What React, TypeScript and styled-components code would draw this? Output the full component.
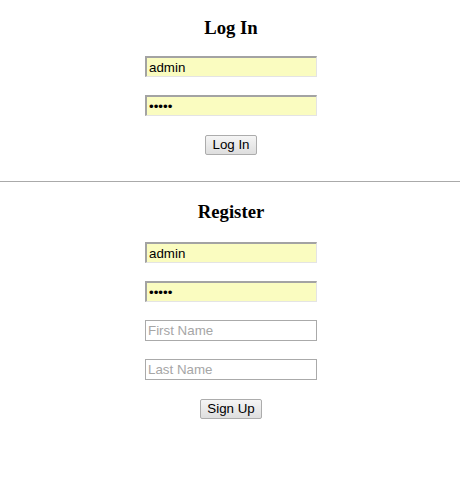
import styled, { createGlobalStyle } from 'styled-components';

const GlobalStyle = createGlobalStyle`
  html, body {
    margin: 0;
    padding: 0;
    background: #ffffff;
  }
`;

const Page = styled.div`
  width: 460px;
  box-sizing: border-box;
  display: flex;
  flex-direction: column;
`;

const Section = styled.form<{ $top: number }>`
  display: flex;
  flex-direction: column;
  align-items: center;
  padding-top: ${(p) => p.$top}px;
  padding-left: 2px;
`;

const Title = styled.h3<{ $gap: number }>`
  margin: 0 0 ${(p) => p.$gap}px;
  height: 22px;
  line-height: 22px;
  font-family: "Liberation Serif", "Times New Roman", serif;
  font-size: 18.72px;
  font-weight: 700;
  color: #000;
`;

const Field = styled.input<{ $filled?: boolean }>`
  box-sizing: border-box;
  width: 172px;
  height: 21px;
  margin: 0 0 18px;
  padding: 0 2px;
  font-family: "Liberation Sans", Arial, sans-serif;
  font-size: 13.33px;
  color: #000;
  outline: none;
  background: ${(p) => (p.$filled ? '#fafcc0' : '#ffffff')};
  border-style: solid;
  border-color: ${(p) =>
    p.$filled ? '#a3a3a3 #e4e4e4 #e4e4e4 #a3a3a3' : '#aaaaaa'};
  border-width: ${(p) => (p.$filled ? '2px 1px 1px 2px' : '1px')};

  &::placeholder {
    color: #a6a6a6;
  }
`;

const Button = styled.button`
  margin-top: 1px;
  height: 20px;
  padding: 0 6px;
  font-family: "Liberation Sans", Arial, sans-serif;
  font-size: 13.33px;
  line-height: 16px;
  color: #000;
  border: 1px solid #acacac;
  border-radius: 2px;
  background: linear-gradient(#f5f5f5, #dedede);
  cursor: pointer;
`;

const Divider = styled.hr`
  margin: 26px 0 0;
  height: 0;
  border: 0;
  border-top: 1px solid #aaaaaa;
`;

const App = () => {
  return (
    <>
      <GlobalStyle />
      <Page>
        <Section $top={17} onSubmit={(e) => e.preventDefault()}>
          <Title $gap={17}>Log In</Title>
          <Field $filled type="text" defaultValue="admin" />
          <Field $filled type="password" defaultValue="admin" />
          <Button type="submit">Log In</Button>
        </Section>
        <Divider />
        <Section $top={19} onSubmit={(e) => e.preventDefault()}>
          <Title $gap={19}>Register</Title>
          <Field $filled type="text" defaultValue="admin" />
          <Field $filled type="password" defaultValue="admin" />
          <Field type="text" placeholder="First Name" />
          <Field type="text" placeholder="Last Name" />
          <Button type="submit">Sign Up</Button>
        </Section>
      </Page>
    </>
  );
};

export default App;
